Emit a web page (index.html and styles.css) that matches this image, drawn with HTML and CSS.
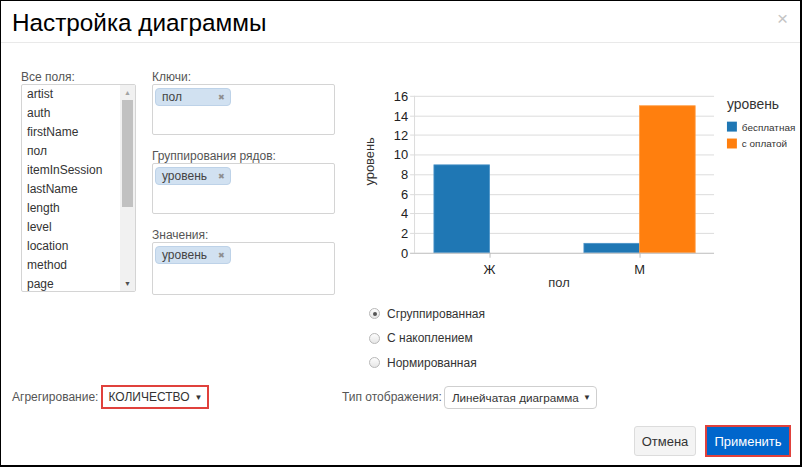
FILE: index.html
```html
<!DOCTYPE html>
<html lang="ru">
<head>
<meta charset="utf-8">
<link rel="stylesheet" href="styles.css">
</head>
<body>
<div class="modal">
  <div class="header">
    <h1 class="title">Настройка диаграммы</h1>
    <span class="close">×</span>
  </div>
  <div class="main">
    <div class="fields-area">
      <div class="col-fields">
        <div class="label">Все поля:</div>
        <div class="listbox">
          <ul class="items">
            <li>artist</li><li>auth</li><li>firstName</li><li>пол</li><li>itemInSession</li><li>lastName</li><li>length</li><li>level</li><li>location</li><li>method</li><li>page</li>
          </ul>
          <div class="scrollbar">
            <span class="arrow up">▲</span>
            <div class="track"><div class="thumb"></div></div>
            <span class="arrow down">▼</span>
          </div>
        </div>
      </div>
      <div class="col-keys">
        <div class="label">Ключи:</div>
        <div class="dropbox"><span class="chip"><span>пол</span><span class="x">✖</span></span></div>
        <div class="label spaced">Группирования рядов:</div>
        <div class="dropbox"><span class="chip"><span>уровень</span><span class="x">✖</span></span></div>
        <div class="label spaced">Значения:</div>
        <div class="dropbox tall"><span class="chip"><span>уровень</span><span class="x">✖</span></span></div>
      </div>
    </div>
    <div class="chart-area">
      <svg class="chart" width="460" height="225" viewBox="340 70 460 225" xmlns="http://www.w3.org/2000/svg">
        <g stroke="#dcdcdc" stroke-width="1">
          <line x1="408" y1="96.5" x2="714" y2="96.5"/>
          <line x1="408" y1="116.5" x2="714" y2="116.5"/>
          <line x1="408" y1="135.5" x2="714" y2="135.5"/>
          <line x1="408" y1="155.5" x2="714" y2="155.5"/>
          <line x1="408" y1="175.5" x2="714" y2="175.5"/>
          <line x1="408" y1="195.5" x2="714" y2="195.5"/>
          <line x1="408" y1="214.5" x2="714" y2="214.5"/>
          <line x1="408" y1="234.5" x2="714" y2="234.5"/>
          <line x1="412.5" y1="96" x2="412.5" y2="254"/>
        </g>
        <g font-family="Liberation Sans, Arial, sans-serif" font-size="13" fill="#222" text-anchor="end">
          <text x="406" y="101">16</text>
          <text x="406" y="121">14</text>
          <text x="406" y="140">12</text>
          <text x="406" y="160">10</text>
          <text x="406" y="180">8</text>
          <text x="406" y="200">6</text>
          <text x="406" y="219">4</text>
          <text x="406" y="239">2</text>
          <text x="406" y="259">0</text>
        </g>
        <rect x="432" y="165.5" width="56" height="88.5" fill="#1f77b4" stroke="#4a93c8" stroke-width="0.8"/>
        <rect x="583" y="244.5" width="56" height="9.5" fill="#1f77b4" stroke="#4a93c8" stroke-width="0.8"/>
        <rect x="639" y="106" width="56" height="148" fill="#ff7f0e" stroke="#ff9a40" stroke-width="0.8"/>
        <line x1="408" y1="254.5" x2="714" y2="254.5" stroke="#bbb" stroke-width="1"/>
        <line x1="488.5" y1="254" x2="488.5" y2="259" stroke="#bbb"/>
        <line x1="639.5" y1="254" x2="639.5" y2="259" stroke="#bbb"/>
        <g font-family="Liberation Sans, Arial, sans-serif" font-size="13" fill="#222" text-anchor="middle">
          <text x="488" y="275">Ж</text>
          <text x="639" y="275">М</text>
        </g>
        <text x="558" y="288" font-family="Liberation Sans, Arial, sans-serif" font-size="13" fill="#333" text-anchor="middle">пол</text>
        <text x="0" y="0" transform="translate(372 162) rotate(-90)" font-family="Liberation Sans, Arial, sans-serif" font-size="13" fill="#333" text-anchor="middle">уровень</text>
        <text x="727" y="109" font-family="Liberation Sans, Arial, sans-serif" font-size="14" fill="#333">уровень</text>
        <rect x="727" y="122" width="10" height="10" fill="#1f77b4"/>
        <rect x="727" y="139" width="10" height="10" fill="#ff7f0e"/>
        <text x="742" y="131" font-family="Liberation Sans, Arial, sans-serif" font-size="10" fill="#333">бесплатная</text>
        <text x="742" y="148" font-family="Liberation Sans, Arial, sans-serif" font-size="10" fill="#333">с оплатой</text>
      </svg>
      <div class="radios">
        <label class="radio"><span class="dot checked"></span>Сгруппированная</label>
        <label class="radio"><span class="dot"></span>С накоплением</label>
        <label class="radio"><span class="dot"></span>Нормированная</label>
      </div>
    </div>
    <div class="agg-row">
      <span class="row-label">Агрегирование:</span>
      <span class="select red"><span>КОЛИЧЕСТВО</span><span class="caret">▼</span></span>
    </div>
    <div class="type-row">
      <span class="row-label">Тип отображения:</span>
      <span class="select plain"><span class="nowrap">Линейчатая диаграмма</span><span class="caret">▼</span></span>
    </div>
  </div>
  <div class="footer">
    <button class="btn cancel">Отмена</button>
    <span class="apply-wrap"><button class="btn apply">Применить</button></span>
  </div>
</div>
</body>
</html>
```

FILE: styles.css
```css
* { box-sizing: border-box; }
html, body { margin: 0; padding: 0; background: #fff; }
body { font-family: "Liberation Sans", Arial, sans-serif; color: #333; }

.modal {
  width: 802px;
  height: 467px;
  border-top: 1px solid #000;
  border-left: 1px solid #000;
  border-right: 2px solid #000;
  border-bottom: 2px solid #000;
  display: flex;
  flex-direction: column;
  overflow: hidden;
}

.header {
  height: 42px;
  border-bottom: 1px solid #e9e9e9;
  display: flex;
  align-items: center;
  justify-content: space-between;
  padding: 0 12px 0 11px;
  flex: none;
}
.title {
  margin: 0;
  font-size: 24.3px;
  font-weight: normal;
  color: #000;
  line-height: 28px;
  margin-top: 2px;
}
.close {
  color: #c4c4c4;
  font-size: 19px;
  line-height: 1;
  margin-top: -6px;
}

.main {
  display: grid;
  grid-template-columns: 328px 1fr;
  grid-template-rows: 305px auto;
  row-gap: 10px;
  padding: 27px 0 0 11px;
  flex: none;
}

.fields-area {
  display: flex;
  gap: 16px;
  padding-left: 9px;
}
.label {
  font-size: 12px;
  line-height: 14px;
  color: #555;
}
.label.spaced { margin-top: 14px; }

.col-fields { width: 115px; }
.listbox {
  height: 208px;
  border: 1px solid #d4d4d4;
  border-radius: 2px;
  overflow: hidden;
  display: flex;
}
.items {
  list-style: none;
  margin: 0;
  padding: 0 0 0 5px;
  flex: 1;
}
.items li {
  font-size: 12px;
  line-height: 19px;
  height: 19px;
  color: #333;
  white-space: nowrap;
}
.scrollbar {
  width: 15px;
  flex: none;
  background: #f1f1f1;
  display: flex;
  flex-direction: column;
  align-items: center;
}
.arrow {
  font-size: 7px;
  color: #a3a3a3;
  height: 15px;
  line-height: 15px;
}
.arrow.down { color: #505050; }
.track { flex: 1; width: 100%; padding: 0 2px; }
.thumb {
  width: 100%;
  height: 107px;
  background: #c1c1c1;
}

.col-keys { width: 183px; }
.dropbox {
  height: 51px;
  border: 1px solid #d4d4d4;
  border-radius: 2px;
  padding: 2px;
}
.dropbox.tall { height: 53px; }
.chip {
  display: inline-flex;
  align-items: center;
  justify-content: space-between;
  width: 76px;
  height: 18px;
  padding: 0 5px 0 6px;
  background: #d1e1f1;
  border: 1px solid #bdd2e8;
  border-radius: 4px;
  font-size: 12px;
  color: #444;
}
.chip .x { font-size: 8px; color: #8e8e8e; }

.chart-area {
  display: flex;
  flex-direction: column;
  margin-left: 1px;
}
.chart { display: block; }
.radios {
  display: flex;
  flex-direction: column;
  padding: 8px 0 0 28px;
}
.radio {
  display: flex;
  align-items: center;
  height: 24.5px;
  font-size: 12px;
  color: #333;
}
.dot {
  width: 11px;
  height: 11px;
  border-radius: 50%;
  border: 1px solid #b8b8b8;
  background: linear-gradient(#fdfdfd, #e6e6e6);
  margin-right: 7px;
  position: relative;
}
.dot.checked::after {
  content: "";
  position: absolute;
  left: 2.5px;
  top: 2.5px;
  width: 4px;
  height: 4px;
  border-radius: 50%;
  background: #555;
}

.agg-row, .type-row {
  display: flex;
  align-items: center;
  height: 24px;
  font-size: 12px;
}
.agg-row { gap: 3px; }
.type-row { gap: 2px; padding-left: 2px; }
.row-label { color: #555; }

.select {
  display: inline-flex;
  align-items: center;
  justify-content: space-between;
  height: 24px;
  font-size: 12px;
  color: #333;
  white-space: nowrap;
}
.select.red {
  width: 108px;
  border: 2px solid #e0413c;
  padding: 0 5px 0 5px;
}
.select.plain {
  width: 153px;
  height: 23px;
  border: 1px solid #cfcfcf;
  border-radius: 4px;
  padding: 0 5px 0 7px;
  font-size: 11.7px;
}
.nowrap { white-space: nowrap; }
.caret { font-size: 8px; color: #333; }

.footer {
  display: flex;
  justify-content: flex-end;
  align-items: center;
  gap: 9px;
  padding: 16px 9px 0 0;
}
.btn {
  font-family: "Liberation Sans", Arial, sans-serif;
  font-size: 13px;
  height: 30px;
  border-radius: 3px;
  cursor: pointer;
}
.cancel {
  width: 62px;
  background: #f4f4f4;
  border: 1px solid #dcdcdc;
  color: #333;
}
.apply-wrap {
  display: inline-block;
  border: 2px solid #e0413c;
  padding: 0;
  line-height: 0;
}
.apply {
  width: 82px;
  height: 28px;
  background: #0066cc;
  border: none;
  border-radius: 0;
  color: #fff;
}
```
